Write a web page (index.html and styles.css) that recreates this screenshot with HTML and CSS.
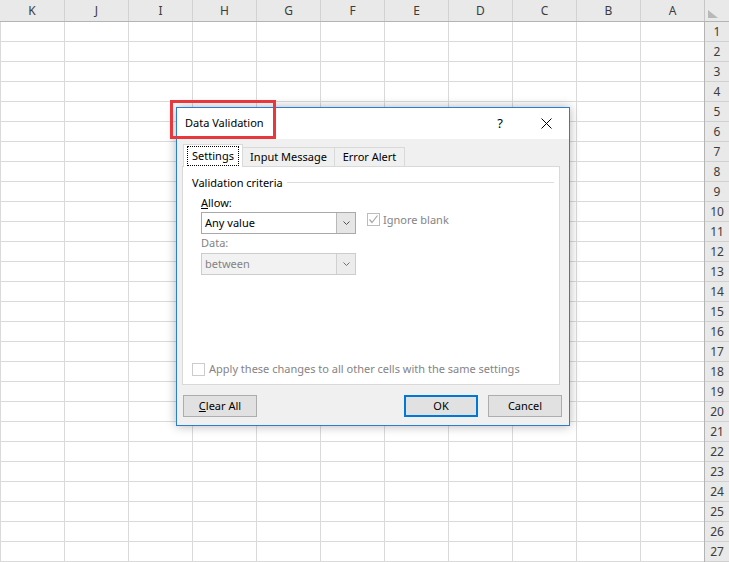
FILE: index.html
```html
<!DOCTYPE html>
<html>
<head>
<meta charset="utf-8">
<title>Data Validation</title>
<link rel="stylesheet" href="styles.css">
</head>
<body>
<div class="sheet">
  <div class="col-heads">
    <div class="ch">K</div><div class="ch">J</div><div class="ch">I</div><div class="ch">H</div><div class="ch">G</div><div class="ch">F</div><div class="ch">E</div><div class="ch">D</div><div class="ch">C</div><div class="ch">B</div><div class="ch">A</div>
    <div class="corner"><svg class="corner-tri" width="10" height="8" viewBox="0 0 10 8"><polygon points="0,0 0,8 10,8" fill="#b8b8b8"/></svg></div>
  </div>
  <div class="sheet-body">
    <div class="cells"></div>
    <div class="row-heads">
      <div class="rh">1</div><div class="rh">2</div><div class="rh">3</div><div class="rh">4</div><div class="rh">5</div><div class="rh">6</div><div class="rh">7</div><div class="rh">8</div><div class="rh">9</div><div class="rh">10</div><div class="rh">11</div><div class="rh">12</div><div class="rh">13</div><div class="rh">14</div><div class="rh">15</div><div class="rh">16</div><div class="rh">17</div><div class="rh">18</div><div class="rh">19</div><div class="rh">20</div><div class="rh">21</div><div class="rh">22</div><div class="rh">23</div><div class="rh">24</div><div class="rh">25</div><div class="rh">26</div><div class="rh">27</div>
    </div>
  </div>
</div>

<div class="dialog">
  <div class="titlebar">
    <div class="title">Data Validation</div>
    <div class="tb-btn help">?</div>
    <div class="tb-btn close"><svg width="11" height="11" viewBox="0 0 11 11"><path d="M0.5 0.5 L10.5 10.5 M10.5 0.5 L0.5 10.5" stroke="#000" stroke-width="1" fill="none"/></svg></div>
  </div>
  <div class="dlg-body">
    <div class="tabs">
      <div class="tab active w-settings"><span class="focus">Settings</span></div>
      <div class="tab w-input">Input Message</div>
      <div class="tab w-error">Error Alert</div>
    </div>
    <div class="panel">
      <div class="legend"><span>Validation criteria</span><span class="legend-line"></span></div>
      <div class="field">
        <div class="label"><span class="u">A</span>llow:</div>
        <div class="combo-row">
          <div class="combo">
            <div class="combo-text">Any value</div>
            <div class="combo-btn"><svg width="7" height="4" viewBox="0 0 7 4"><polyline points="0.5,0.5 3.5,3.5 6.5,0.5" fill="none" stroke="#505050" stroke-width="1"/></svg></div>
          </div>
          <div class="cb cb-dis"><svg width="11" height="11" viewBox="0 0 11 11"><polyline points="1.5,5.5 4,8.5 9.5,1.5" fill="none" stroke="#a6a6a6" stroke-width="1.2"/></svg></div>
          <div class="cb-label dis">Ignore blank</div>
        </div>
        <div class="label dis data-label">Data:</div>
        <div class="combo-row combo2-row">
          <div class="combo combo-dis">
            <div class="combo-text dis">between</div>
            <div class="combo-btn"><svg width="7" height="4" viewBox="0 0 7 4"><polyline points="0.5,0.5 3.5,3.5 6.5,0.5" fill="none" stroke="#707070" stroke-width="1"/></svg></div>
          </div>
        </div>
      </div>
      <div class="apply-row">
        <div class="cb cb-empty"></div>
        <div class="apply-label dis">Apply these changes to all other cells with the same settings</div>
      </div>
    </div>
    <div class="buttons">
      <div class="btn"><span class="u">C</span>lear All</div>
      <div class="spacer"></div>
      <div class="btn btn-default">OK</div>
      <div class="btn">Cancel</div>
    </div>
  </div>
</div>

<div class="callout"></div>
</body>
</html>
```

FILE: styles.css
```css
* { box-sizing: border-box; }

body {
  margin: 0;
  width: 729px;
  height: 562px;
  overflow: hidden;
  position: relative;
  background: #fff;
  font-family: "Noto Sans", "Open Sans", sans-serif;
}

/* ---------- sheet ---------- */
.sheet { display: flex; flex-direction: column; }

.col-heads {
  display: flex;
  height: 22px;
  background: #e9e9e9;
  border-bottom: 1px solid #b4b4b4;
}
.ch {
  width: 64px;
  display: flex;
  align-items: center;
  justify-content: center;
  font-size: 12px;
  color: #3c3c3c;
}
.ch + .ch { border-left: 1px solid #d2d2d2; }
.corner {
  width: 25px;
  border-left: 1px solid #c6c6c6;
  padding: 10px 0 0 3px;
}
.corner-tri { display: block; }

.sheet-body { display: flex; }
.cells {
  width: 704px;
  height: 540px;
  background-image:
    linear-gradient(to right, #dadada 1px, transparent 1px),
    linear-gradient(to bottom, transparent 19px, #dadada 19px);
  background-size: 64px 100%, 100% 20px;
}
.row-heads {
  width: 25px;
  background: #e9e9e9;
  border-left: 1px solid #b4b4b4;
}
.rh {
  height: 20px;
  border-bottom: 1px solid #d0d0d0;
  display: flex;
  align-items: center;
  justify-content: center;
  font-size: 12px;
  color: #3c3c3c;
}

/* ---------- dialog ---------- */
.dialog {
  position: absolute;
  left: 176px;
  top: 107px;
  width: 394px;
  height: 319px;
  border: 1px solid #2b7cd3;
  background: #f0f0f0;
  box-shadow: 0 0 10px rgba(0, 0, 0, 0.3);
  display: flex;
  flex-direction: column;
  font-size: 11px;
  color: #000;
}
.titlebar {
  height: 31px;
  background: #fff;
  display: flex;
  align-items: center;
}
.title { flex: 1; padding: 0 0 2px 8px; font-size: 11px; }
.tb-btn {
  width: 46px;
  height: 31px;
  display: flex;
  align-items: center;
  justify-content: center;
}
.help { font-size: 13px; padding-bottom: 1px; }

.dlg-body {
  flex: 1;
  display: flex;
  flex-direction: column;
  padding: 5px 8px 0 5px;
}

.tabs {
  display: flex;
  align-items: flex-end;
  height: 23px;
  padding-left: 1px;
  margin-bottom: -1px;
  position: relative;
  z-index: 1;
}
.tab {
  height: 19px;
  margin-bottom: 1px;
  border: 1px solid #d9d9d9;
  border-bottom: none;
  background: #f0f0f0;
  display: flex;
  align-items: center;
  justify-content: center;
  padding-bottom: 1px;
}
.tab + .tab { border-left: none; }
.tab.active {
  height: 23px;
  margin-bottom: 0;
  background: #fff;
  padding-top: 1px;
  padding-bottom: 2px;
}
.w-settings { width: 60px; }
.w-input { width: 92px; }
.w-error { width: 70px; }
.focus {
  outline: 1px dotted #000;
  padding: 1px 4px 2px;
}

.panel {
  width: 378px;
  height: 219px;
  background: #fff;
  border: 1px solid #d9d9d9;
  display: flex;
  flex-direction: column;
  padding: 8px 5px 7px 9px;
}
.legend {
  display: flex;
  align-items: center;
  height: 16px;
  padding-bottom: 2px;
}
.legend-line {
  flex: 1;
  border-top: 1px solid #dcdcdc;
  margin-left: 4px;
}
.field { padding-left: 9px; }
.label {
  height: 16px;
  margin-top: 4px;
  padding-bottom: 2px;
  display: flex;
  align-items: center;
}
.data-label { margin-top: 1px; }
.u { text-decoration: underline; }
.dis { color: #848484; }

.combo-row {
  display: flex;
  align-items: flex-start;
  margin-top: 1px;
}
.combo2-row { margin-top: 2px; }
.combo {
  width: 155px;
  height: 22px;
  border: 1px solid #a9a9a9;
  background: #fff;
  display: flex;
}
.combo-dis { background: #f2f2f2; border-color: #cccccc; }
.combo-text {
  flex: 1;
  padding: 0 0 2px 3px;
  display: flex;
  align-items: center;
}
.combo-btn {
  width: 19px;
  background: #e6e6e6;
  border-left: 1px solid #b9b9b9;
  display: flex;
  align-items: center;
  justify-content: center;
}
.combo-dis .combo-btn { background: #ececec; border-left-color: #d0d0d0; }

.cb {
  width: 13px;
  height: 13px;
  border: 1px solid #bcbcbc;
  background: #fff;
  flex: none;
}
.cb svg { display: block; }
.cb-dis { margin: 1px 0 0 11px; }
.cb-label { margin: 0 0 0 3px; height: 14px; display: flex; align-items: center; }
.cb-empty { border-color: #cccccc; }

.apply-row {
  margin-top: auto;
  display: flex;
  align-items: center;
  height: 16px;
}
.apply-label { margin-left: 4px; padding-bottom: 2px; }

.buttons {
  display: flex;
  width: 380px;
  padding-left: 1px;
  margin-top: 10px;
}
.spacer { flex: 1; }
.btn {
  width: 74px;
  height: 22px;
  background: #e1e1e1;
  border: 1px solid #adadad;
  display: flex;
  align-items: center;
  justify-content: center;
  padding-bottom: 2px;
}
.btn-default {
  border: 2px solid #0078d7;
  margin-right: 10px;
}

/* ---------- annotation ---------- */
.callout {
  position: absolute;
  left: 170px;
  top: 100px;
  width: 106px;
  height: 39px;
  border: 3px solid #e8383d;
}
```
